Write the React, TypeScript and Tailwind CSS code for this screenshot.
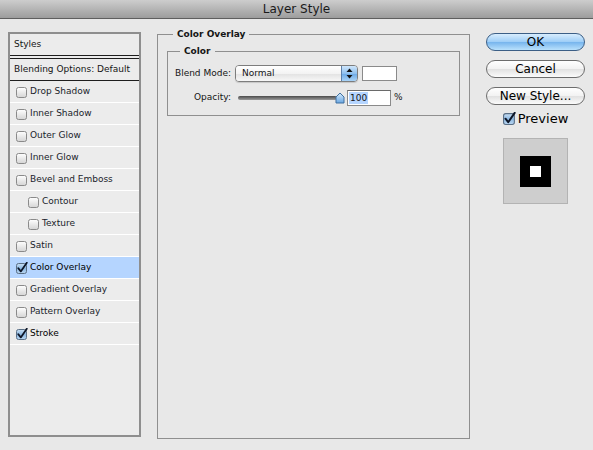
import React from 'react';

type Row = { label: string; indent?: boolean; checked?: boolean; selected?: boolean };

const rows: Row[] = [
  { label: 'Drop Shadow' },
  { label: 'Inner Shadow' },
  { label: 'Outer Glow' },
  { label: 'Inner Glow' },
  { label: 'Bevel and Emboss' },
  { label: 'Contour', indent: true },
  { label: 'Texture', indent: true },
  { label: 'Satin' },
  { label: 'Color Overlay', checked: true, selected: true },
  { label: 'Gradient Overlay' },
  { label: 'Pattern Overlay' },
  { label: 'Stroke', checked: true },
];

function Check({ checked, size = 12 }: { checked?: boolean; size?: number }) {
  return (
    <svg width={size} height={size} viewBox="0 0 12 12" className="shrink-0">
      <defs>
        <linearGradient id="cbOff" x1="0" y1="0" x2="0" y2="1">
          <stop offset="0" stopColor="#ffffff" />
          <stop offset="1" stopColor="#d4d4d4" />
        </linearGradient>
        <linearGradient id="cbOn" x1="0" y1="0" x2="0" y2="1">
          <stop offset="0" stopColor="#c9dff3" />
          <stop offset="0.5" stopColor="#8db8e2" />
          <stop offset="1" stopColor="#b9d6f1" />
        </linearGradient>
      </defs>
      <rect x="0.5" y="1.5" width="10" height="10" rx="2" fill={checked ? 'url(#cbOn)' : 'url(#cbOff)'} stroke={checked ? '#5a6f86' : '#8a8a8a'} />
      {checked && <path d="M2.3 6.2 L4.8 9.4 L10.8 0.8" fill="none" stroke="#0d1526" strokeWidth="1.8" strokeLinecap="round" strokeLinejoin="round" />}
    </svg>
  );
}

export default function App() {
  return (
    <div className="w-[593px] h-[450px] bg-[#e8e8e8] flex flex-col font-['DejaVu_Sans',sans-serif] text-[#151515] overflow-hidden">
      {/* title bar */}
      <div className="h-[19px] shrink-0 border-b border-[#5f5f5f] bg-[linear-gradient(to_bottom,#cdcdcd,#9d9d9d)] flex items-center justify-center text-[12px] leading-none text-[#1a1a1a]">
        Layer Style
      </div>

      <div className="flex items-start">
        {/* styles list */}
        <div className="ml-[8px] mt-[13px] w-[133px] h-[405px] border-2 border-[#8e8e8e] bg-[#ececec] text-[9px]">
          <div className="h-[22px] border-b border-[#1e1e1e] flex items-center pl-[4px]">Styles</div>
          <div className="h-[3px] border-b border-[#1e1e1e]" />
          <div className="h-[22px] border-b border-[#1e1e1e] flex items-center pl-[4px]">Blending Options: Default</div>
          {rows.map((r) => (
            <div
              key={r.label}
              className={`h-[22px] border-b border-white flex items-center gap-[2px] ${r.indent ? 'pl-[18px]' : 'pl-[6px]'} ${r.selected ? 'bg-[#b5d5ff] text-black' : ''}`}
            >
              <Check checked={r.checked} size={12} />
              <span className={r.checked ? 'text-black' : 'text-[#1a1d2b]'}>{r.label}</span>
            </div>
          ))}
        </div>

        {/* color overlay group */}
        <fieldset className="ml-[16px] mt-[10px] w-[313px] h-[410px] border border-[#8f8f8f]">
          <legend className="ml-[15px] px-[4px] text-[9px] leading-[11px] font-bold">Color Overlay</legend>
          <fieldset className="mx-[9px] mt-[6px] border border-[#8f8f8f]">
            <legend className="ml-[12px] px-[4px] text-[9px] leading-[11px] font-bold">Color</legend>
            <div className="pt-[8px] pb-[9px] flex flex-col gap-[8px] text-[9px]">
              <div className="h-[17px] flex items-center">
                <div className="w-[63px] text-right">Blend Mode:</div>
                <div className="ml-[4px] w-[123px] h-[17px] rounded-[4px] border border-[#7d7d7d] flex overflow-hidden shadow-[0_1px_1px_rgba(0,0,0,0.15)]">
                  <div className="flex-1 bg-[linear-gradient(to_bottom,#ffffff_0%,#f3f3f3_50%,#e2e2e2_51%,#f7f7f7_100%)] flex items-center pl-[6px]">Normal</div>
                  <div className="w-[16px] border-l border-[#5d7fa8] bg-[linear-gradient(to_bottom,#cfe6fb_0%,#8fc0ef_50%,#6aa8e6_51%,#a9d3f7_100%)] flex items-center justify-center">
                    <svg width="7" height="11" viewBox="0 0 7 11">
                      <path d="M3.5 0.5 L6.5 4 L0.5 4 Z" fill="#111" />
                      <path d="M3.5 10.5 L6.5 7 L0.5 7 Z" fill="#111" />
                    </svg>
                  </div>
                </div>
                <div className="ml-[4px] w-[35px] h-[15px] bg-white border border-[#8a8a8a]" />
              </div>
              <div className="h-[16px] flex items-center">
                <div className="w-[63px] text-right">Opacity:</div>
                <div className="ml-[7px] w-[107px] h-[16px] flex items-center">
                  <div className="w-[99px] h-[4px] rounded-full bg-[linear-gradient(to_bottom,#4a4a4a,#9a9a9a)]" />
                  <svg width="10" height="12" viewBox="0 0 10 12" className="-ml-[2px]">
                    <defs>
                      <linearGradient id="thumb" x1="0" y1="0" x2="0" y2="1">
                        <stop offset="0" stopColor="#d6ebfd" />
                        <stop offset="1" stopColor="#6aa7e2" />
                      </linearGradient>
                    </defs>
                    <path d="M1 5 L5 1 L9 5 L9 11 L1 11 Z" fill="url(#thumb)" stroke="#3f6f9f" strokeLinejoin="round" />
                  </svg>
                </div>
                <div className="ml-[2px] w-[44px] h-[16px] bg-white border border-[#8a8a8a] border-t-[#6a6a6a] flex items-center pl-[1px]">
                  <span className="bg-[#b5d5ff] px-[1px] leading-[12px]">100</span>
                </div>
                <span className="ml-[3px]">%</span>
              </div>
            </div>
          </fieldset>
        </fieldset>

        {/* buttons */}
        <div className="ml-[16px] mt-[14px] w-[99px] flex flex-col items-center text-[12px]">
          <div className="w-[99px] h-[18px] rounded-full border border-[#3c5f86] bg-[linear-gradient(to_bottom,#d8edfd_0%,#9ccdf7_50%,#76b4ed_51%,#b9e1fc_100%)] flex items-center justify-center leading-none text-black">
            OK
          </div>
          <div className="mt-[9px] w-[99px] h-[18px] rounded-full border border-[#6d6d6d] bg-[linear-gradient(to_bottom,#ffffff_0%,#f2f2f2_50%,#e1e1e1_51%,#fbfbfb_100%)] flex items-center justify-center leading-none text-black">
            Cancel
          </div>
          <div className="mt-[9px] w-[99px] h-[18px] rounded-full border border-[#6d6d6d] bg-[linear-gradient(to_bottom,#ffffff_0%,#f2f2f2_50%,#e1e1e1_51%,#fbfbfb_100%)] flex items-center justify-center leading-none text-black">
            New Style...
          </div>
          <div className="mt-[7px] flex items-center gap-[2px] text-[13px] leading-none text-black">
            <Check checked size={13} />
            <span>Preview</span>
          </div>
          <div className="mt-[13px] w-[65px] h-[66px] bg-[#cecece] border border-[#b3b3b3] flex items-center justify-center">
            <div className="w-[31px] h-[31px] bg-black flex items-center justify-center">
              <div className="w-[11px] h-[11px] bg-white" />
            </div>
          </div>
        </div>
      </div>
    </div>
  );
}
